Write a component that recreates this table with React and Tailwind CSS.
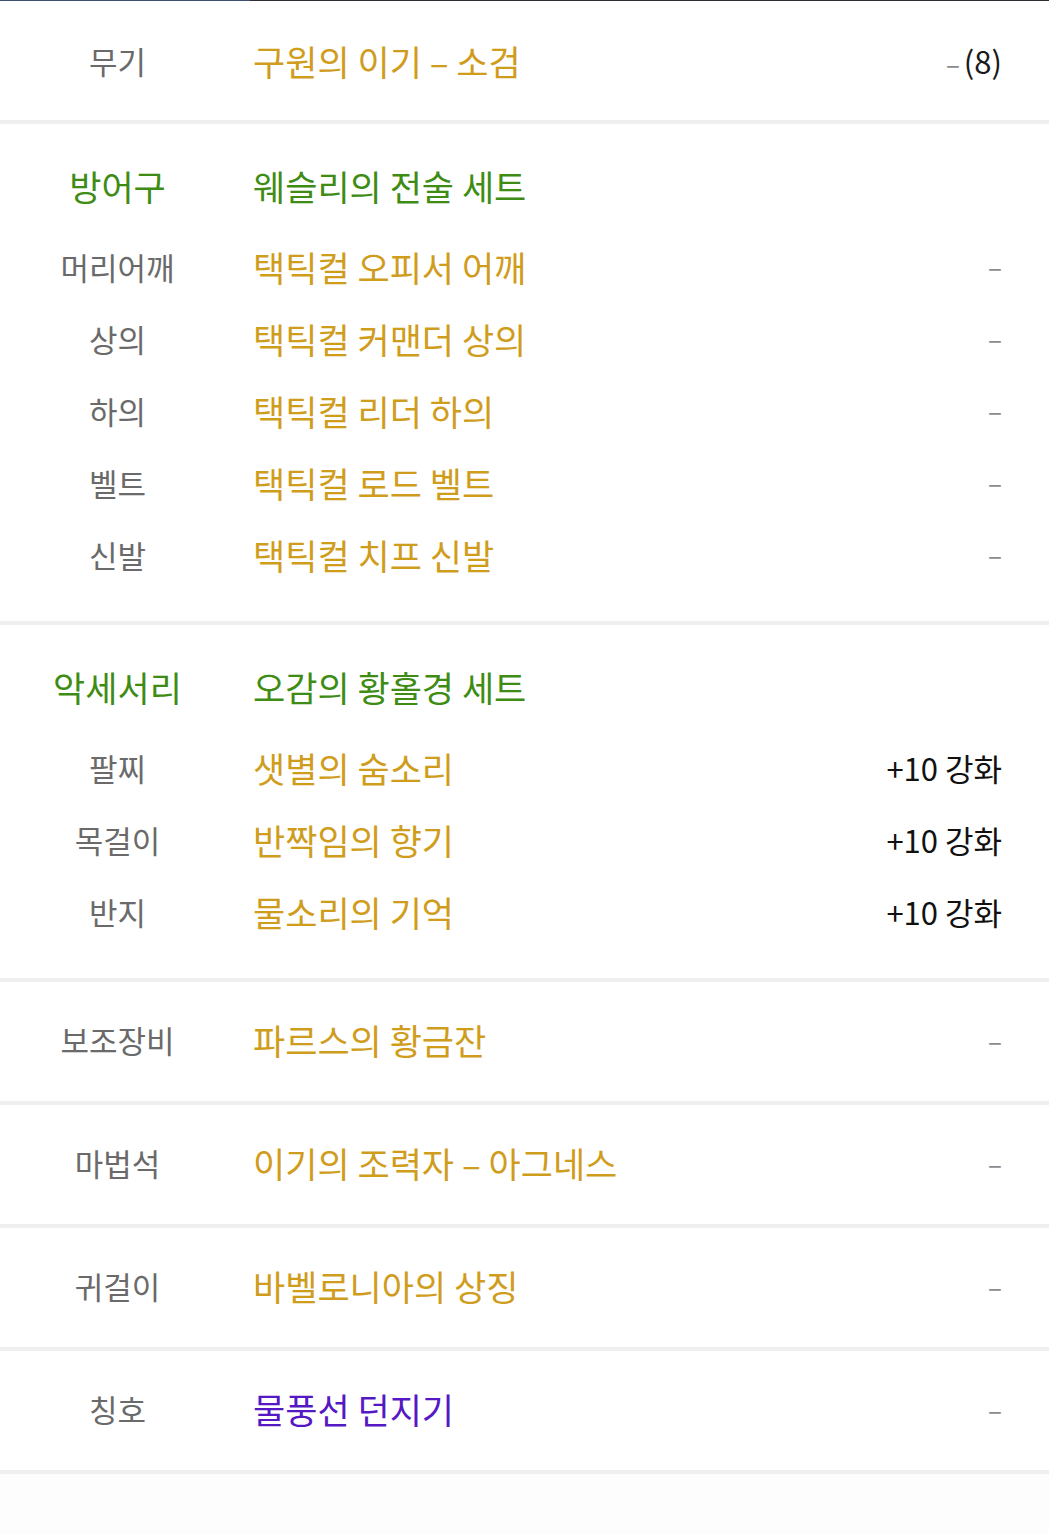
import React from "react";

const GRAY = "text-[#6a6a6a]";
const GOLD = "text-[#d09c1c]";
const GREEN = "text-[#3e8c14]";
const PURPLE = "text-[#5518c4]";

const sections = [
  {
    rows: [{ label: "무기", value: "구원의 이기 – 소검", color: GOLD, right: "dash8" }],
  },
  {
    header: { label: "방어구", value: "웨슬리의 전술 세트" },
    rows: [
      { label: "머리어깨", value: "택틱컬 오피서 어깨", color: GOLD, right: "dash" },
      { label: "상의", value: "택틱컬 커맨더 상의", color: GOLD, right: "dash" },
      { label: "하의", value: "택틱컬 리더 하의", color: GOLD, right: "dash" },
      { label: "벨트", value: "택틱컬 로드 벨트", color: GOLD, right: "dash" },
      { label: "신발", value: "택틱컬 치프 신발", color: GOLD, right: "dash" },
    ],
  },
  {
    header: { label: "악세서리", value: "오감의 황홀경 세트" },
    rows: [
      { label: "팔찌", value: "샛별의 숨소리", color: GOLD, right: "+10 강화" },
      { label: "목걸이", value: "반짝임의 향기", color: GOLD, right: "+10 강화" },
      { label: "반지", value: "물소리의 기억", color: GOLD, right: "+10 강화" },
    ],
  },
  { rows: [{ label: "보조장비", value: "파르스의 황금잔", color: GOLD, right: "dash" }] },
  { rows: [{ label: "마법석", value: "이기의 조력자 – 아그네스", color: GOLD, right: "dash" }] },
  { rows: [{ label: "귀걸이", value: "바벨로니아의 상징", color: GOLD, right: "dash" }] },
  { rows: [{ label: "칭호", value: "물풍선 던지기", color: PURPLE, right: "dash" }] },
];

const RightCell = ({ right }) => {
  if (right === "dash") return <span className="text-[26px] text-[#8a8a8a]">–</span>;
  if (right === "dash8")
    return (
      <span className="text-[31px]">
        <span className="mr-[4px] text-[26px] text-[#8a8a8a]">–</span>
        <span className="text-[#1a1a1a]">(8)</span>
      </span>
    );
  return <span className="text-[31px] text-[#111111]">{right}</span>;
};

const Row = ({ row, single }) => (
  <div className={`flex items-center ${single ? "h-[71px]" : "h-[72px]"}`}>
    <div className={`w-[235px] shrink-0 text-center text-[31px] ${GRAY}`}>{row.label}</div>
    <div className={`flex-1 pl-[18px] text-[35px] ${row.color}`}>{row.value}</div>
    <div className="pr-[47px]">
      <RightCell right={row.right} />
    </div>
  </div>
);

export default function App() {
  return (
    <div
      className="w-[1049px] min-h-[1534px] bg-[#fdfdfd] leading-none"
      style={{ fontFamily: '"Noto Sans CJK KR", "Noto Sans", sans-serif' }}
    >
      <div className="flex h-px">
        <div className="w-[250px] bg-[#3d4f72]" />
        <div className="flex-1 bg-[#2b2f33]" />
      </div>
      {sections.map((section, i) => (
        <div
          key={i}
          className={`border-b-4 border-[#efefef] bg-white ${
            i === 0 ? "pt-6 pb-6" : section.header ? "pt-[22px] pb-[31px]" : "pt-[22px] pb-[26px]"
          }`}
        >
          {section.header && (
            <div className={`mb-[6px] flex h-[78px] items-center ${GREEN}`}>
              <div className="w-[235px] shrink-0 text-center text-[35px]">{section.header.label}</div>
              <div className="flex-1 pl-[18px] text-[35px]">{section.header.value}</div>
            </div>
          )}
          {section.rows.map((row) => (
            <Row key={row.label} row={row} single={!section.header} />
          ))}
        </div>
      ))}
    </div>
  );
}
